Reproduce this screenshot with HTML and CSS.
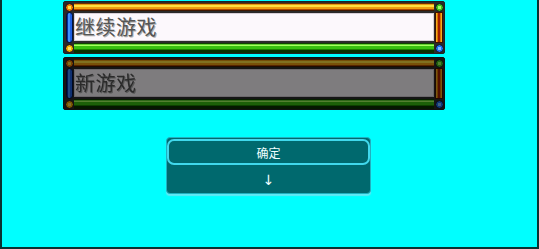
FILE: index.html
```html
<!DOCTYPE html>
<html lang="zh">
<head>
<meta charset="utf-8">
<title>菜单</title>
<link rel="stylesheet" href="styles.css">
</head>
<body>
<div class="screen">
  <div class="menu">
    <div class="panel">
      <div class="corner c-tl"></div>
      <div class="bar bar-top"></div>
      <div class="corner c-tr"></div>
      <div class="bar bar-left"></div>
      <div class="content"><span class="label">继续游戏</span></div>
      <div class="bar bar-right"></div>
      <div class="corner c-bl"></div>
      <div class="bar bar-bottom"></div>
      <div class="corner c-br"></div>
    </div>
    <div class="panel dim">
      <div class="corner c-tl"></div>
      <div class="bar bar-top"></div>
      <div class="corner c-tr"></div>
      <div class="bar bar-left"></div>
      <div class="content"><span class="label">新游戏</span></div>
      <div class="bar bar-right"></div>
      <div class="corner c-bl"></div>
      <div class="bar bar-bottom"></div>
      <div class="corner c-br"></div>
    </div>
  </div>
  <div class="dialog">
    <div class="btn-ok">确定</div>
    <div class="btn-arrow">↓</div>
  </div>
</div>
</body>
</html>
```
FILE: styles.css
```css
html, body {
  margin: 0;
  padding: 0;
  background: #00ffff;
}
.screen {
  box-sizing: border-box;
  width: 539px;
  height: 249px;
  background: #00ffff;
  border: 2px solid #0a3232;
  border-top: 0;
  padding: 1px 0 0 61px;
  font-family: "Noto Sans CJK SC", "Noto Sans", sans-serif;
}
.menu {
  display: flex;
  flex-direction: column;
  gap: 3px;
  width: 382px;
}
.panel {
  box-sizing: border-box;
  height: 53px;
  display: grid;
  grid-template-columns: 10px 1fr 10px;
  grid-template-rows: 10px 1fr 10px;
  background: #2a2a2a;
  border: 1px solid #222;
  border-radius: 2px;
}
.panel.dim {
  filter: brightness(0.5);
}
.bar-top {
  margin: 1px 0 1px;
  background: linear-gradient(#6a3000 0 1px, #e89a10 1px 2px, #ffe040 2px 4px, #f0a010 4px 6px, #b04800 6px 7px, #401800 7px);
}
.bar-bottom {
  background: linear-gradient(#104000 0 1px, #60d030 1px 2px, #a8ff60 2px 3px, #38c010 3px 6px, #1a8000 6px 7px, #0a3000 7px);
}
.bar-left {
  margin: 0 1px 0 2px;
  border-radius: 4px;
  border: 1px solid #001040;
  background: linear-gradient(90deg, #0030a0 0 1px, #4090ff 1px 3px, #2060e0 3px 5px, #0030a0 5px);
}
.bar-right {
  margin: 0 1px 0 1px;
  border: 1px solid #401000;
  background: linear-gradient(90deg, #f0b020 0 1px, #e07000 1px 2px, #a02000 2px 4px, #e07000 4px 5px, #f0b020 5px);
}
.corner {
  margin: 0.5px;
  border-radius: 50%;
  border: 1px solid #202020;
}
.c-tl { background: radial-gradient(circle, #ffe040 0 1.5px, #f08000 2px 3px, #c02000 3.5px); }
.c-bl { background: radial-gradient(circle, #ffe060 0 1.5px, #f0b000 2px 3px, #c06000 3.5px); }
.c-tr { background: radial-gradient(circle, #a0ff60 0 1.5px, #40c020 2px 3px, #107000 3.5px); }
.c-br { background: radial-gradient(circle, #80c0ff 0 1.5px, #2070f0 2px 3px, #0030a0 3.5px); }
.content {
  background: #fcf8fc;
  box-shadow: inset 0 0 0 1px #d8d0d8;
  display: flex;
  align-items: center;
  padding-left: 1px;
  margin: 1px 0 2px;
}
.label {
  font-size: 20px;
  line-height: 24px;
  color: #555;
  text-shadow: 1px 1px 0 #b0b0b0;
  letter-spacing: 0.5px;
}
.dialog {
  box-sizing: border-box;
  width: 205px;
  height: 57px;
  margin: 27px 0 0 103px;
  background: #00696e;
  border: 1px solid #20b0c0;
  border-radius: 4px;
  box-shadow: 0 2px 1px #60e8f4;
  display: flex;
  flex-direction: column;
  padding: 1px 0 0;
}
.btn-ok {
  box-sizing: border-box;
  height: 26px;
  border: 2px solid #40d8ec;
  border-radius: 7px;
  color: #f0ffff;
  font-size: 12px;
  display: flex;
  align-items: center;
  justify-content: center;
}
.btn-arrow {
  flex: 1;
  color: #f0ffff;
  font-size: 14px;
  padding-top: 2px;
  font-family: "DejaVu Sans", sans-serif;
  display: flex;
  align-items: center;
  justify-content: center;
}
```
